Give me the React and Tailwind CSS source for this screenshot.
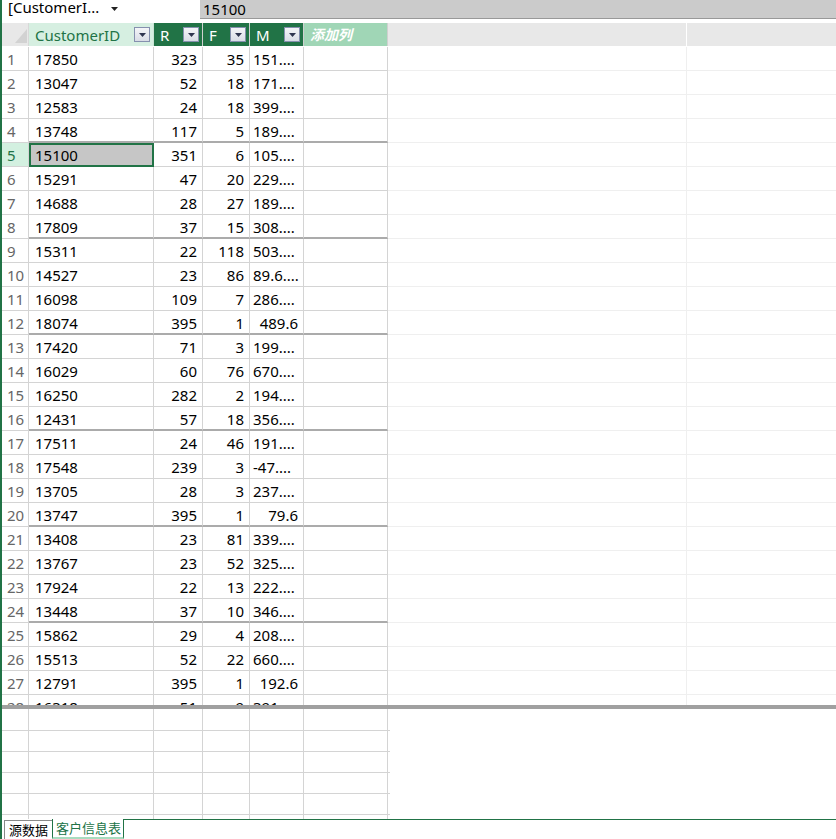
import React from "react";

// RFM table, Power Pivot style grid
const rows = [
  ["17850", "323", "35", "151...."],
  ["13047", "52", "18", "171...."],
  ["12583", "24", "18", "399...."],
  ["13748", "117", "5", "189...."],
  ["15100", "351", "6", "105...."],
  ["15291", "47", "20", "229...."],
  ["14688", "28", "27", "189...."],
  ["17809", "37", "15", "308...."],
  ["15311", "22", "118", "503...."],
  ["14527", "23", "86", "89.6...."],
  ["16098", "109", "7", "286...."],
  ["18074", "395", "1", "489.6"],
  ["17420", "71", "3", "199...."],
  ["16029", "60", "76", "670...."],
  ["16250", "282", "2", "194...."],
  ["12431", "57", "18", "356...."],
  ["17511", "24", "46", "191...."],
  ["17548", "239", "3", "-47...."],
  ["13705", "28", "3", "237...."],
  ["13747", "395", "1", "79.6"],
  ["13408", "23", "81", "339...."],
  ["13767", "23", "52", "325...."],
  ["17924", "22", "13", "222...."],
  ["13448", "37", "10", "346...."],
  ["15862", "29", "4", "208...."],
  ["15513", "52", "22", "660...."],
  ["12791", "395", "1", "192.6"],
  ["16318", "51", "9", "391...."],
];

const FilterBtn = () => (
  <span className="absolute right-[3px] top-[4px] w-[16px] h-[15px] border border-[#8590ae] bg-gradient-to-b from-[#f4f5f8] to-[#d9dde6] flex items-center justify-center">
    <svg width="7" height="4" viewBox="0 0 7 4">
      <path d="M0 0h7L3.5 4z" fill="#2f3550" />
    </svg>
  </span>
);

const DataRow = ({ n, r, selected }) => {
  const group = n % 4 === 0;
  const cellB = group ? "border-b-2 border-b-[#ababab]" : "border-b border-b-[#d4d4d4]";
  const long = r[3].includes("....");
  return (
    <div className="flex h-[24px] shrink-0 text-[15px] leading-[24px]">
      <div
        className={`w-[27px] shrink-0 border-r border-b border-[#d4d4d4] pl-[5px] ${
          selected ? "bg-[#d3f0e0] text-[#217346]" : "text-[#666]"
        }`}
      >
        {n}
      </div>
      <div className={`w-[125px] shrink-0 border-r border-r-[#d4d4d4] ${cellB} relative`}>
        {selected ? (
          <div className="absolute left-0 top-0 w-[125px] h-[24px] border-2 border-[#217346] bg-[#c6c6c6] pl-[4px] leading-[21px] text-black">
            {r[0]}
          </div>
        ) : (
          <span className="pl-[6px] text-black">{r[0]}</span>
        )}
      </div>
      <div className={`w-[49px] shrink-0 border-r border-r-[#d4d4d4] ${cellB} text-right pr-[5px] text-black`}>{r[1]}</div>
      <div className={`w-[47px] shrink-0 border-r border-r-[#d4d4d4] ${cellB} text-right pr-[5px] text-black`}>{r[2]}</div>
      <div
        className={`w-[54px] shrink-0 border-r border-r-[#d4d4d4] ${cellB} text-black whitespace-nowrap overflow-hidden ${
          long ? "pl-[3px]" : "text-right pr-[5px]"
        }`}
      >
        {r[3]}
      </div>
      <div className={`w-[84px] shrink-0 border-r border-r-[#d4d4d4] ${cellB}`}></div>
      <div className="w-[299px] shrink-0 border-r border-b border-[#efefef]"></div>
      <div className="flex-1 border-b border-[#efefef]"></div>
    </div>
  );
};

const EmptyRow = ({ h }) => (
  <div className={`flex ${h} shrink-0`}>
    <div className="w-[27px] shrink-0 border-r border-b border-[#d4d4d4]"></div>
    <div className="w-[125px] shrink-0 border-r border-b border-[#d4d4d4]"></div>
    <div className="w-[49px] shrink-0 border-r border-b border-[#d4d4d4]"></div>
    <div className="w-[47px] shrink-0 border-r border-b border-[#d4d4d4]"></div>
    <div className="w-[54px] shrink-0 border-r border-b border-[#d4d4d4]"></div>
    <div className="w-[84px] shrink-0 border-r border-b border-[#d4d4d4]"></div>
    <div className="w-[2px] shrink-0 border-b border-[#d4d4d4]"></div>
    <div className="flex-1"></div>
  </div>
);

export default function App() {
  return (
    <div className="w-[836px] h-[839px] overflow-hidden bg-white border-l-2 border-[#217346] flex flex-col font-['Noto_Sans','Noto_Sans_CJK_SC',sans-serif]">
      {/* name box + formula bar */}
      <div className="flex h-[19px] shrink-0">
        <div className="w-[198px] shrink-0 flex items-start pl-[6px] text-[15px] leading-[14px] text-black">
          <span>[CustomerI...</span>
          <svg className="ml-[12px] mt-[7px]" width="7" height="4" viewBox="0 0 7 4">
            <path d="M0 0h7L3.5 4z" fill="#222" />
          </svg>
        </div>
        <div className="flex-1 bg-[#cbcbcb] border-b border-[#999] pl-[3px] text-[15px] leading-[18px] text-black">15100</div>
      </div>
      <div className="h-[4px] shrink-0"></div>

      {/* top pane */}
      <div className="h-[682px] shrink-0 overflow-hidden flex flex-col">
        <div className="flex h-[24px] shrink-0 text-[15px] leading-[24px] border-b border-white">
          <div className="w-[27px] shrink-0 bg-[#e8e8e8] border-r border-[#d8d8d8] relative">
            <svg className="absolute right-[1px] bottom-[3px]" width="12" height="14" viewBox="0 0 12 14">
              <path d="M12 0V14H0z" fill="#d2d2d2" />
            </svg>
          </div>
          <div className="w-[125px] shrink-0 bg-[#d6efe1] border-r border-[#c9e3d4] text-[#217346] pl-[6px] relative">
            CustomerID
            <FilterBtn />
          </div>
          <div className="w-[49px] shrink-0 bg-[#217346] border-r border-[#d0d0d0] text-white pl-[6px] relative">
            R
            <FilterBtn />
          </div>
          <div className="w-[47px] shrink-0 bg-[#217346] border-r border-[#d0d0d0] text-white pl-[6px] relative">
            F
            <FilterBtn />
          </div>
          <div className="w-[54px] shrink-0 bg-[#217346] border-r border-[#d0d0d0] text-white pl-[6px] relative">
            M
            <FilterBtn />
          </div>
          <div className="w-[84px] shrink-0 bg-[#a0d6b6] border-r border-[#d0d0d0] text-white font-bold italic pl-[6px] text-[14px]">
            添加列
          </div>
          <div className="w-[299px] shrink-0 bg-[#e8e8e8] border-r border-white"></div>
          <div className="flex-1 bg-[#e8e8e8]"></div>
        </div>
        {rows.map((r, i) => (
          <DataRow key={i} n={i + 1} r={r} selected={i === 4} />
        ))}
      </div>

      {/* splitter */}
      <div className="h-[4px] shrink-0 bg-[#a0a0a0]"></div>

      {/* bottom pane */}
      <div className="h-[110px] shrink-0 overflow-hidden flex flex-col">
        <EmptyRow h="h-[22px]" />
        <EmptyRow h="h-[21px]" />
        <EmptyRow h="h-[21px]" />
        <EmptyRow h="h-[21px]" />
        <EmptyRow h="h-[21px]" />
        <EmptyRow h="h-[21px]" />
      </div>

      {/* sheet tabs */}
      <div className="flex h-[20px] shrink-0 text-[13px] leading-[19px]">
        <div className="w-[2px] shrink-0"></div>
        <div className="w-[48px] shrink-0 mt-[1px] border-l border-t border-[#8a8a8a] pl-[4px] text-black whitespace-nowrap">源数据</div>
        <div className="w-[72px] shrink-0 border-l border-r border-[#217346] border-b-2 border-b-[#a8dcbf] pl-[3px] text-[#217346] bg-white whitespace-nowrap">
          客户信息表
        </div>
        <div className="flex-1 border-t border-[#217346]"></div>
      </div>
    </div>
  );
}
